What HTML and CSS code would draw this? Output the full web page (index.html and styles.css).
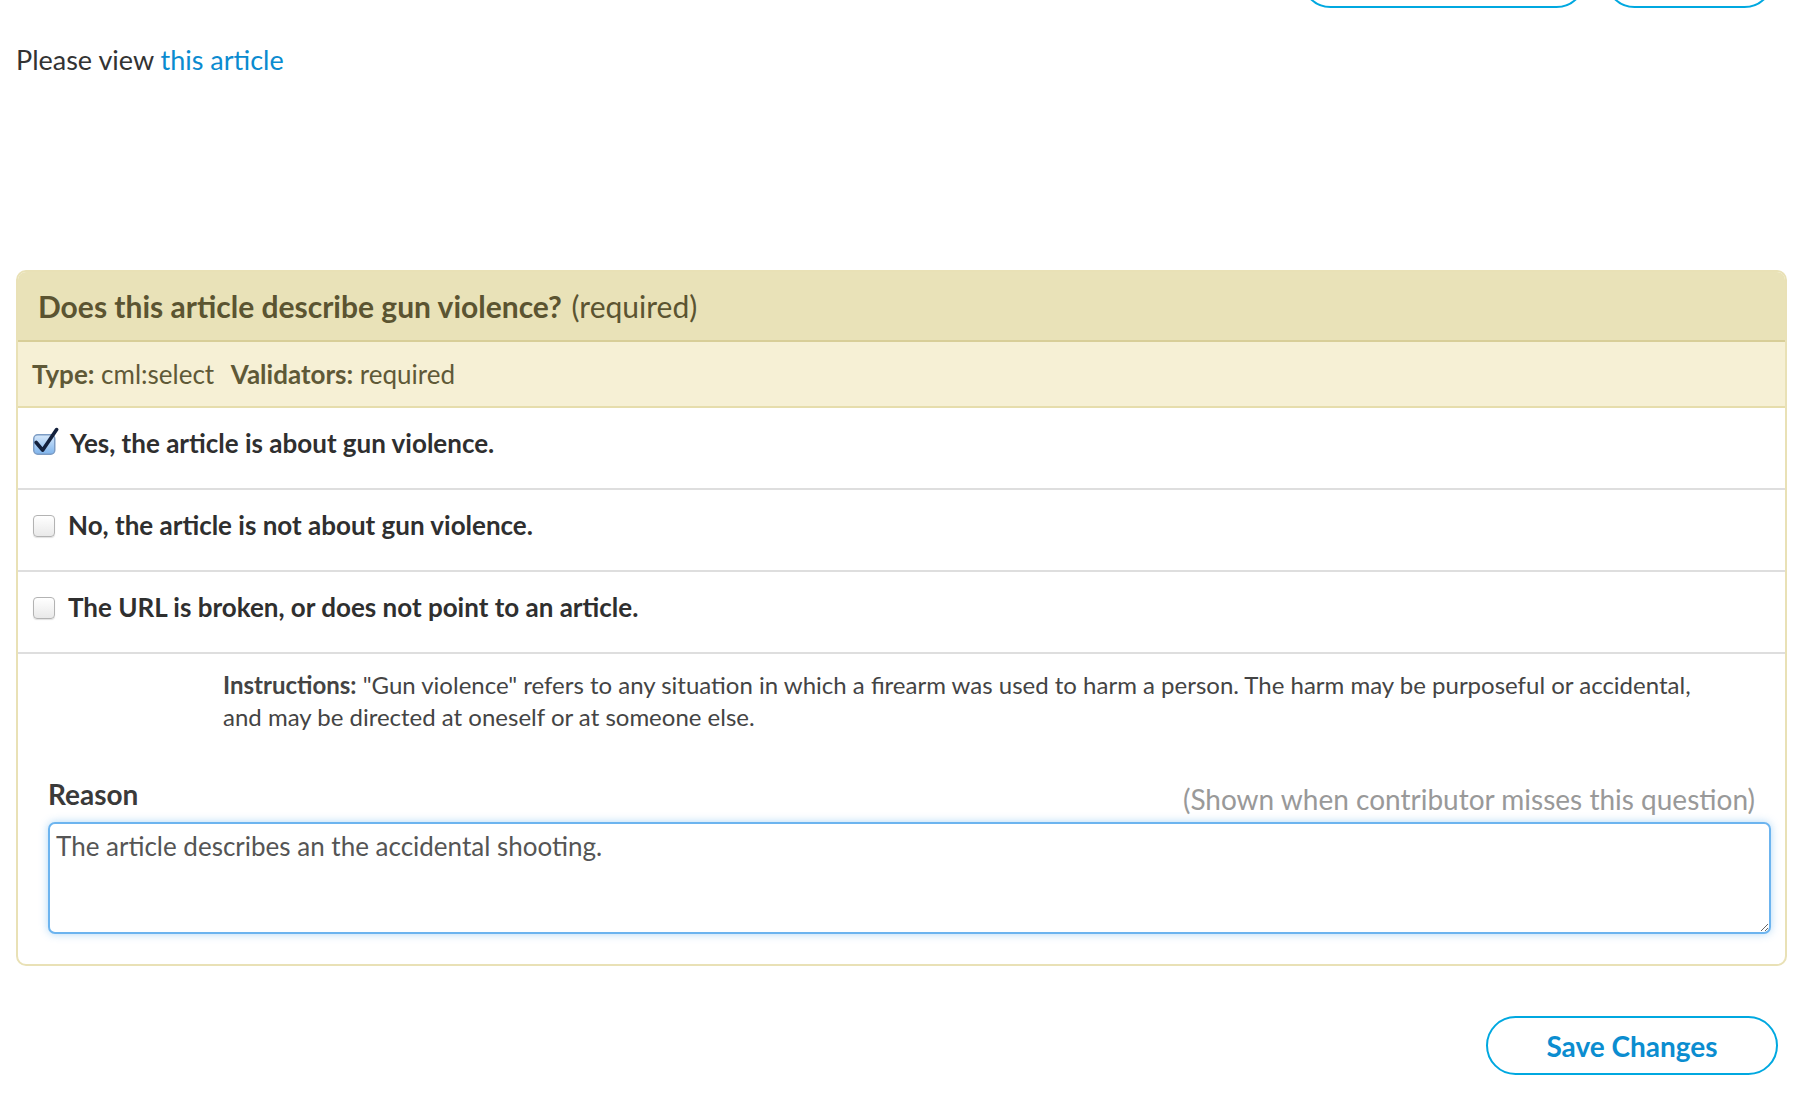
FILE: index.html
```html
<!DOCTYPE html>
<html lang="en">
<head>
<meta charset="utf-8">
<title>Question preview</title>
<link rel="stylesheet" href="styles.css">
</head>
<body>
<div class="page">
  <div class="topbar">
    <button class="pill pill-wide" type="button">Preview</button>
    <button class="pill pill-narrow" type="button">Edit</button>
  </div>

  <p class="intro">Please view <a href="#" class="link">this article</a></p>

  <section class="panel">
    <header class="panel-head">
      <span class="q-title">Does this article describe gun violence?</span>
      <span class="q-req">(required)</span>
    </header>
    <div class="panel-meta">
      <b>Type:</b> cml:select <span class="sp"></span><b>Validators:</b> required
    </div>

    <ul class="options">
      <li class="option">
        <svg class="cb-checked" width="26" height="28" viewBox="0 0 26 28" aria-hidden="true">
          <defs>
            <linearGradient id="cbg" x1="0" y1="0" x2="0" y2="1">
              <stop offset="0" stop-color="#d6e8fb"/>
              <stop offset="1" stop-color="#7fb4ec"/>
            </linearGradient>
          </defs>
          <rect x="0.75" y="7.75" width="21" height="19.5" rx="4" fill="url(#cbg)" stroke="#7d9cc4" stroke-width="1.5"/>
          <path d="M3.2 15.5 L9.6 23.2 L23.6 2.6" fill="none" stroke="#14213d" stroke-width="3.6" stroke-linecap="round" stroke-linejoin="round"/>
        </svg>
        <span class="opt-text">Yes, the article is about gun violence.</span>
      </li>
      <li class="option">
        <span class="cb"></span>
        <span class="opt-text">No, the article is not about gun violence.</span>
      </li>
      <li class="option">
        <span class="cb"></span>
        <span class="opt-text">The URL is broken, or does not point to an article.</span>
      </li>
    </ul>

    <div class="instructions">
      <p><b>Instructions:</b> "Gun violence" refers to any situation in which a firearm was used to harm a person. The harm may be purposeful or accidental, and may be directed at oneself or at someone else.</p>
    </div>

    <div class="reason">
      <div class="reason-head">
        <span class="reason-label">Reason</span>
        <span class="reason-hint">(Shown when contributor misses this question)</span>
      </div>
      <textarea class="reason-box" readonly>The article describes an the accidental shooting.</textarea>
    </div>
  </section>

  <div class="actions">
    <button class="pill save" type="button">Save Changes</button>
  </div>
</div>
</body>
</html>
```

FILE: styles.css
```css
html, body {
  margin: 0;
  padding: 0;
  background: #ffffff;
}

body {
  font-family: Lato, "Open Sans", "Liberation Sans", sans-serif;
  color: #333333;
}

.page {
  padding: 0 31px 0 16px;
}

/* top buttons, mostly scrolled off */
.topbar {
  height: 8px;
  overflow: hidden;
  display: flex;
  justify-content: flex-end;
  align-items: flex-end;
  gap: 19px;
  padding-right: 13px;
}

.pill {
  flex: none;
  height: 59px;
  border: 2px solid #00a8e0;
  border-radius: 30px;
  background: #ffffff;
  color: #0b8dd0;
  font-family: Lato, "Open Sans", sans-serif;
  font-weight: 700;
  font-size: 28px;
  padding: 0;
}

.pill-wide { width: 285px; }
.pill-narrow { width: 169px; }

.intro {
  margin: 34px 0 0 0;
  font-size: 27px;
  line-height: 36px;
  color: #333333;
}

.link {
  color: #0a8bd0;
  text-decoration: none;
}

/* panel */
.panel {
  margin-top: 192px;
  border: 2px solid #e9e1b6;
  border-radius: 10px;
  overflow: hidden;
  background: #ffffff;
}

.panel-head {
  background: #e9e2b8;
  border-bottom: 2px solid #d8ce98;
  height: 66px;
  padding: 2px 0 0 20px;
  line-height: 64px;
  font-size: 30px;
  color: #5b5431;
}

.q-title {
  font-weight: 700;
  margin-right: 2px;
}

.q-req {
  font-weight: 400;
}

.panel-meta {
  background: #f6f0d5;
  border-bottom: 2px solid #e6ddac;
  height: 64px;
  line-height: 64px;
  padding-left: 14px;
  font-size: 26px;
  color: #5f5937;
}

.panel-meta b {
  font-weight: 700;
}

.sp {
  display: inline-block;
  width: 10px;
}

.options {
  list-style: none;
  margin: 0;
  padding: 0;
}

.option {
  height: 80px;
  border-bottom: 2px solid #dedede;
  display: flex;
  align-items: center;
  padding-left: 15px;
}

.cb-checked {
  flex: none;
  margin: -14px 11px 0 0;
}

.cb {
  flex: none;
  width: 20px;
  height: 20px;
  border: 1.5px solid #b3b3b3;
  border-radius: 4px;
  background: linear-gradient(#ffffff, #e9e9e9);
  box-shadow: 0 1px 1px rgba(0, 0, 0, 0.12);
  margin: 0 13px 9px 0;
}

.opt-text {
  font-size: 26px;
  font-weight: 700;
  line-height: 60px;
  margin-bottom: 11px;
  color: #2f2f2f;
}

.instructions {
  padding: 15px 65px 0 205px;
}

.instructions p {
  margin: 0;
  font-size: 24px;
  line-height: 32px;
  color: #444444;
}

.instructions b {
  font-weight: 700;
}

.reason {
  padding: 43px 14px 30px 30px;
}

.reason-head {
  display: flex;
  justify-content: space-between;
  align-items: flex-start;
}

.reason-label {
  font-size: 28px;
  font-weight: 700;
  line-height: 36px;
  color: #3a3a3a;
}

.reason-hint {
  font-size: 28px;
  line-height: 36px;
  padding-top: 5px;
  margin-right: 16px;
  color: #999999;
}

.reason-box {
  display: block;
  box-sizing: border-box;
  width: 100%;
  height: 112px;
  margin-top: 5px;
  border: 2px solid #6cb4ef;
  border-radius: 7px;
  box-shadow: 0 0 9px rgba(82, 168, 236, 0.45);
  padding: 6px 6px;
  font-family: Lato, "Open Sans", sans-serif;
  font-size: 26px;
  line-height: 32px;
  color: #555555;
  outline: none;
  resize: vertical;
}

.actions {
  display: flex;
  justify-content: flex-end;
  padding: 50px 9px 0 0;
}

.save {
  width: 292px;
  height: 59px;
}
```
